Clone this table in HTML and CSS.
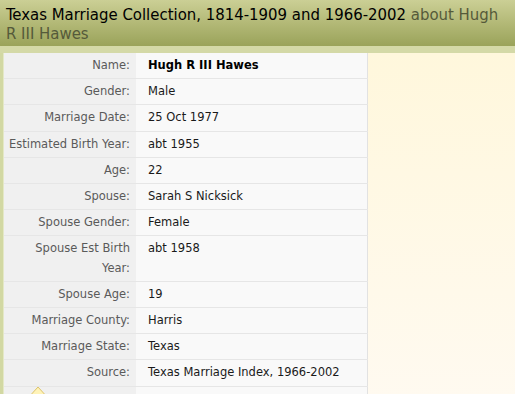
FILE: index.html
```html
<!DOCTYPE html>
<html>
<head>
<meta charset="utf-8">
<link rel="stylesheet" href="styles.css">
</head>
<body>
<div class="page">
  <h1 class="title">Texas Marriage Collection, 1814-1909 and 1966-2002 <span class="about">about Hugh R III Hawes</span></h1>
  <div class="band"></div>
  <div class="main">
    <table class="record">
      <tr><th>Name:</th><td class="bold">Hugh R III Hawes</td></tr>
      <tr><th>Gender:</th><td>Male</td></tr>
      <tr><th>Marriage Date:</th><td>25 Oct 1977</td></tr>
      <tr><th>Estimated Birth Year:</th><td>abt 1955</td></tr>
      <tr><th>Age:</th><td>22</td></tr>
      <tr><th>Spouse:</th><td>Sarah S Nicksick</td></tr>
      <tr><th>Spouse Gender:</th><td>Female</td></tr>
      <tr><th>Spouse Est Birth Year:</th><td>abt 1958</td></tr>
      <tr><th>Spouse Age:</th><td>19</td></tr>
      <tr><th>Marriage County:</th><td>Harris</td></tr>
      <tr><th>Marriage State:</th><td>Texas</td></tr>
      <tr><th>Source:</th><td>Texas Marriage Index, 1966-2002</td></tr>
      <tr class="last"><th><svg class="pointer" width="22" height="14" viewBox="0 0 22 14"><path d="M0.5 13.5 L11 2 L21.5 13.5 Z" fill="#fff3b8" stroke="#dcc36a" stroke-width="1"/></svg></th><td></td></tr>
    </table>
    <div class="side"></div>
  </div>
</div>
</body>
</html>
```
FILE: styles.css
```css
html, body {
  margin: 0;
  padding: 0;
  background: #fff9e8;
}
.page {
  width: 515px;
  height: 394px;
  overflow: hidden;
  display: flex;
  flex-direction: column;
}
.title {
  flex-shrink: 0;
  margin: 0;
  padding: 5px 10px 5px 6px;
  height: 36px;
  font-family: "DejaVu Sans Condensed", "DejaVu Sans", sans-serif;
  font-weight: normal;
  font-size: 16.6px;
  line-height: 19px;
  color: #000;
  background: linear-gradient(#cbcf95, #b3b977 50%, #9aa35a);
}
.about {
  color: #555a3a;
}
.band {
  flex-shrink: 0;
  height: 7px;
  background: #d4d9a7;
}
.main {
  flex: 1 0 auto;
  display: flex;
  align-items: flex-start;
  padding-left: 4px;
  background: linear-gradient(90deg, #d2d8a3 0, #d2d8a3 3px, #e4e8c6 3px, #e4e8c6 4px, transparent 4px);
}
.record {
  width: 364px;
  border-collapse: collapse;
  font-family: "DejaVu Sans", Verdana, sans-serif;
  font-size: 11.5px;
  line-height: 19.2px;
  border-right: 1px solid #e2e2e2;
}
.record th {
  width: 126px;
  padding: 3px 6px 3px 0;
  text-align: right;
  vertical-align: top;
  font-weight: normal;
  color: #5a5a5a;
  background: #f0f0f0;
  border-bottom: 1px solid #e6e6e6;
}
.record td {
  padding: 3px 6px 3px 12px;
  vertical-align: top;
  color: #1a1a1a;
  background: #f9f9f9;
  border-bottom: 1px solid #e6e6e6;
}
.record td.bold {
  font-weight: bold;
  color: #000;
}
.record tr.last th, .record tr.last td {
  border-bottom: none;
  height: 20px;
  position: relative;
}
.pointer {
  position: absolute;
  left: 23px;
  top: -2px;
  display: block;
}
.side {
  flex: 1;
  align-self: stretch;
  background: linear-gradient(#fff7dc, #fffaf1);
}
```
